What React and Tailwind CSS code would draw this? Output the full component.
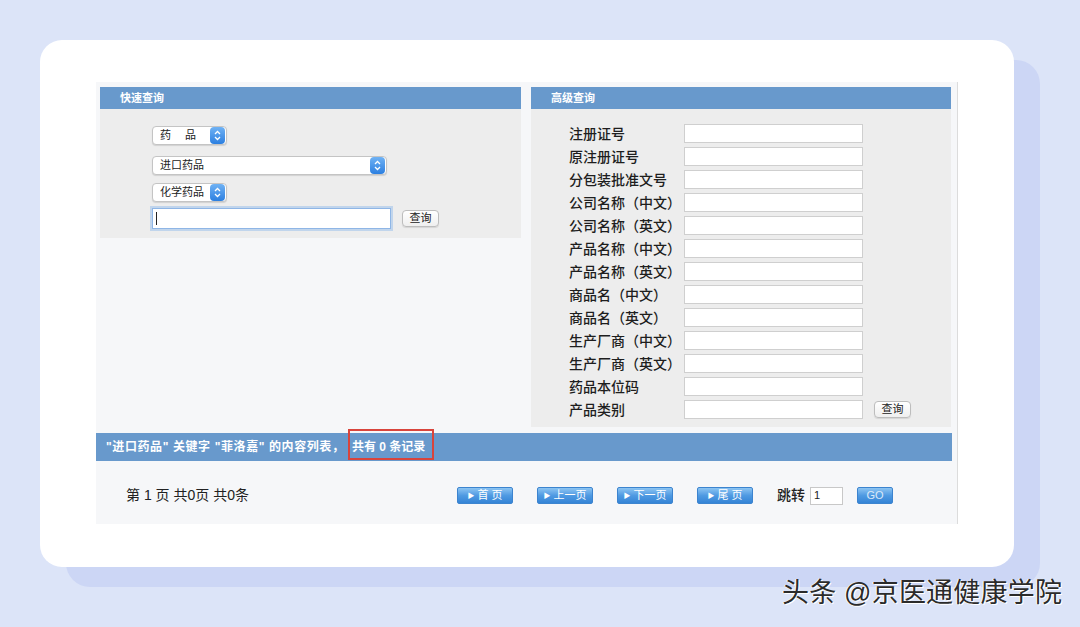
import React from "react";

const sans = { fontFamily: '"Liberation Sans", "Noto Sans CJK SC", sans-serif' };

function Stepper() {
  return (
    <span className="flex h-[17px] w-[15px] items-center justify-center rounded-[4px] bg-gradient-to-b from-[#6fb2f4] to-[#2b7fe0]">
      <svg width="7" height="11" viewBox="0 0 7 11">
        <path d="M1 4 L3.5 1.5 L6 4" fill="none" stroke="white" strokeWidth="1.3" />
        <path d="M1 7 L3.5 9.5 L6 7" fill="none" stroke="white" strokeWidth="1.3" />
      </svg>
    </span>
  );
}

function Select({ label, width, spaced }) {
  return (
    <div
      className="flex h-[19px] items-center justify-between rounded-[4px] border border-[#c4c4c4] bg-white pl-[7px] pr-[1px] shadow-[0_1px_1px_rgba(0,0,0,0.12)]"
      style={{ width }}
    >
      <span className={`text-[11px] leading-none text-[#222] ${spaced ? "tracking-[14px]" : ""}`}>{label}</span>
      <Stepper />
    </div>
  );
}

function MacButton({ children }) {
  return (
    <button className="flex h-[17px] w-[37px] items-center justify-center rounded-[4px] border border-[#bdbdbd] bg-gradient-to-b from-white to-[#efefef] text-[11px] leading-none text-[#222] shadow-[0_1px_1px_rgba(0,0,0,0.1)]">
      {children}
    </button>
  );
}

function PageBtn({ children, w = "w-[56px]" }) {
  return (
    <button
      className={`flex h-[17px] ${w} items-center justify-center gap-[3px] rounded-[2px] border border-[#3c84cf] bg-gradient-to-b from-[#8cc4f2] via-[#4f9ae2] to-[#3484d6] text-[11px] leading-none text-white`}
    >
      {children}
    </button>
  );
}

const Tri = () => <span className="text-[7px] leading-none text-white">▶</span>;

const labels = [
  "注册证号",
  "原注册证号",
  "分包装批准文号",
  "公司名称（中文）",
  "公司名称（英文）",
  "产品名称（中文）",
  "产品名称（英文）",
  "商品名（中文）",
  "商品名（英文）",
  "生产厂商（中文）",
  "生产厂商（英文）",
  "药品本位码",
  "产品类别",
];

export default function App() {
  return (
    <div className="relative h-[627px] w-[1080px] overflow-hidden bg-[#dce4f8]" style={sans}>
      {/* back shadow card */}
      <div className="absolute left-[66px] top-[60px] h-[527px] w-[974px] rounded-[24px] bg-[#ccd6f5]" />

      {/* white card */}
      <div className="relative ml-[40px] mt-[40px] h-[527px] w-[974px] rounded-[22px] bg-white pl-[56px] pt-[42px]">
        <div className="w-[862px] border-r border-[#dcdcdc] bg-[#f6f7f9] pt-[5px]">
          {/* panels */}
          <div className="flex items-start gap-[10px] pl-[4px]">
            {/* quick search */}
            <div className="w-[421px]">
              <div className="flex h-[22px] items-center bg-[#6899cc] pl-[20px] text-[11px] font-bold text-white">快速查询</div>
              <div className="flex h-[129px] flex-col bg-[#ededed] pl-[52px] pt-[17px]">
                <Select label="药品" width={75} spaced />
                <div className="mt-[11px]">
                  <Select label="进口药品" width={235} />
                </div>
                <div className="mt-[8px]">
                  <Select label="化学药品" width={75} />
                </div>
                <div className="mt-[6px] flex items-center gap-[11px]">
                  <div className="flex h-[21px] w-[239px] items-center border border-[#8fb6e6] bg-white pl-[3px] shadow-[0_0_0_2px_rgba(140,185,235,0.45)]">
                    <span className="h-[13px] w-px bg-[#222]" />
                  </div>
                  <MacButton>查询</MacButton>
                </div>
              </div>
            </div>

            {/* advanced search */}
            <div className="w-[420px]">
              <div className="flex h-[22px] items-center bg-[#6899cc] pl-[20px] text-[11px] font-bold text-white">高级查询</div>
              <div className="flex h-[318px] flex-col gap-[4px] bg-[#ededed] pl-[38px] pt-[15px]">
                {labels.map((l, i) => (
                  <div key={l} className="flex h-[19px] items-center">
                    <span className="w-[115px] text-[14px] font-medium leading-none text-[#1e1e1e]">{l}</span>
                    <div className="h-[19px] w-[179px] border border-[#cfcfcf] bg-white" />
                    {i === labels.length - 1 && (
                      <div className="ml-[11px]">
                        <MacButton>查询</MacButton>
                      </div>
                    )}
                  </div>
                ))}
              </div>
            </div>
          </div>

          {/* result bar */}
          <div className="mt-[6px] flex h-[28px] w-[856px] items-center bg-[#6899cc] pl-[10px] text-[12px] font-bold text-white">
            <span className="w-[246px] tracking-[0.6px] leading-[14px]">"进口药品" 关键字 "菲洛嘉" 的内容列表，</span>
            <span className="relative leading-[14px]">
              共有 0 条记录
              <span className="absolute left-[-4px] top-[-11px] h-[31px] w-[86px] border-2 border-[#d8443c]" />
            </span>
          </div>

          {/* pagination */}
          <div className="flex h-[63px] items-center pt-[6px]">
            <span className="w-[361px] pl-[30px] text-[14px] text-[#222]">第 1 页 共0页 共0条</span>
            <div className="flex items-center gap-[24px]">
              <PageBtn>
                <Tri />首 页
              </PageBtn>
              <PageBtn>
                <Tri />上一页
              </PageBtn>
              <PageBtn>
                <Tri />下一页
              </PageBtn>
              <PageBtn>
                <Tri />尾 页
              </PageBtn>
            </div>
            <span className="ml-[24px] text-[14px] font-medium text-[#222]">跳转</span>
            <div className="ml-[5px] flex h-[18px] w-[33px] items-center border border-[#c8c8c8] bg-white pl-[3px] text-[11px] text-[#222]">1</div>
            <div className="ml-[14px]">
              <PageBtn w="w-[36px]">
                <span className="text-[#dbe9f8]">GO</span>
              </PageBtn>
            </div>
          </div>
        </div>
      </div>

      {/* watermark */}
      <div className="absolute left-[782px] top-[576px] text-[27px] leading-[34px] tracking-[0.2px] text-[#2b2b2b] [text-shadow:1px_1px_0_#ffffff,-1px_0_0_#ffffff]">
        头条 @京医通健康学院
      </div>
    </div>
  );
}
